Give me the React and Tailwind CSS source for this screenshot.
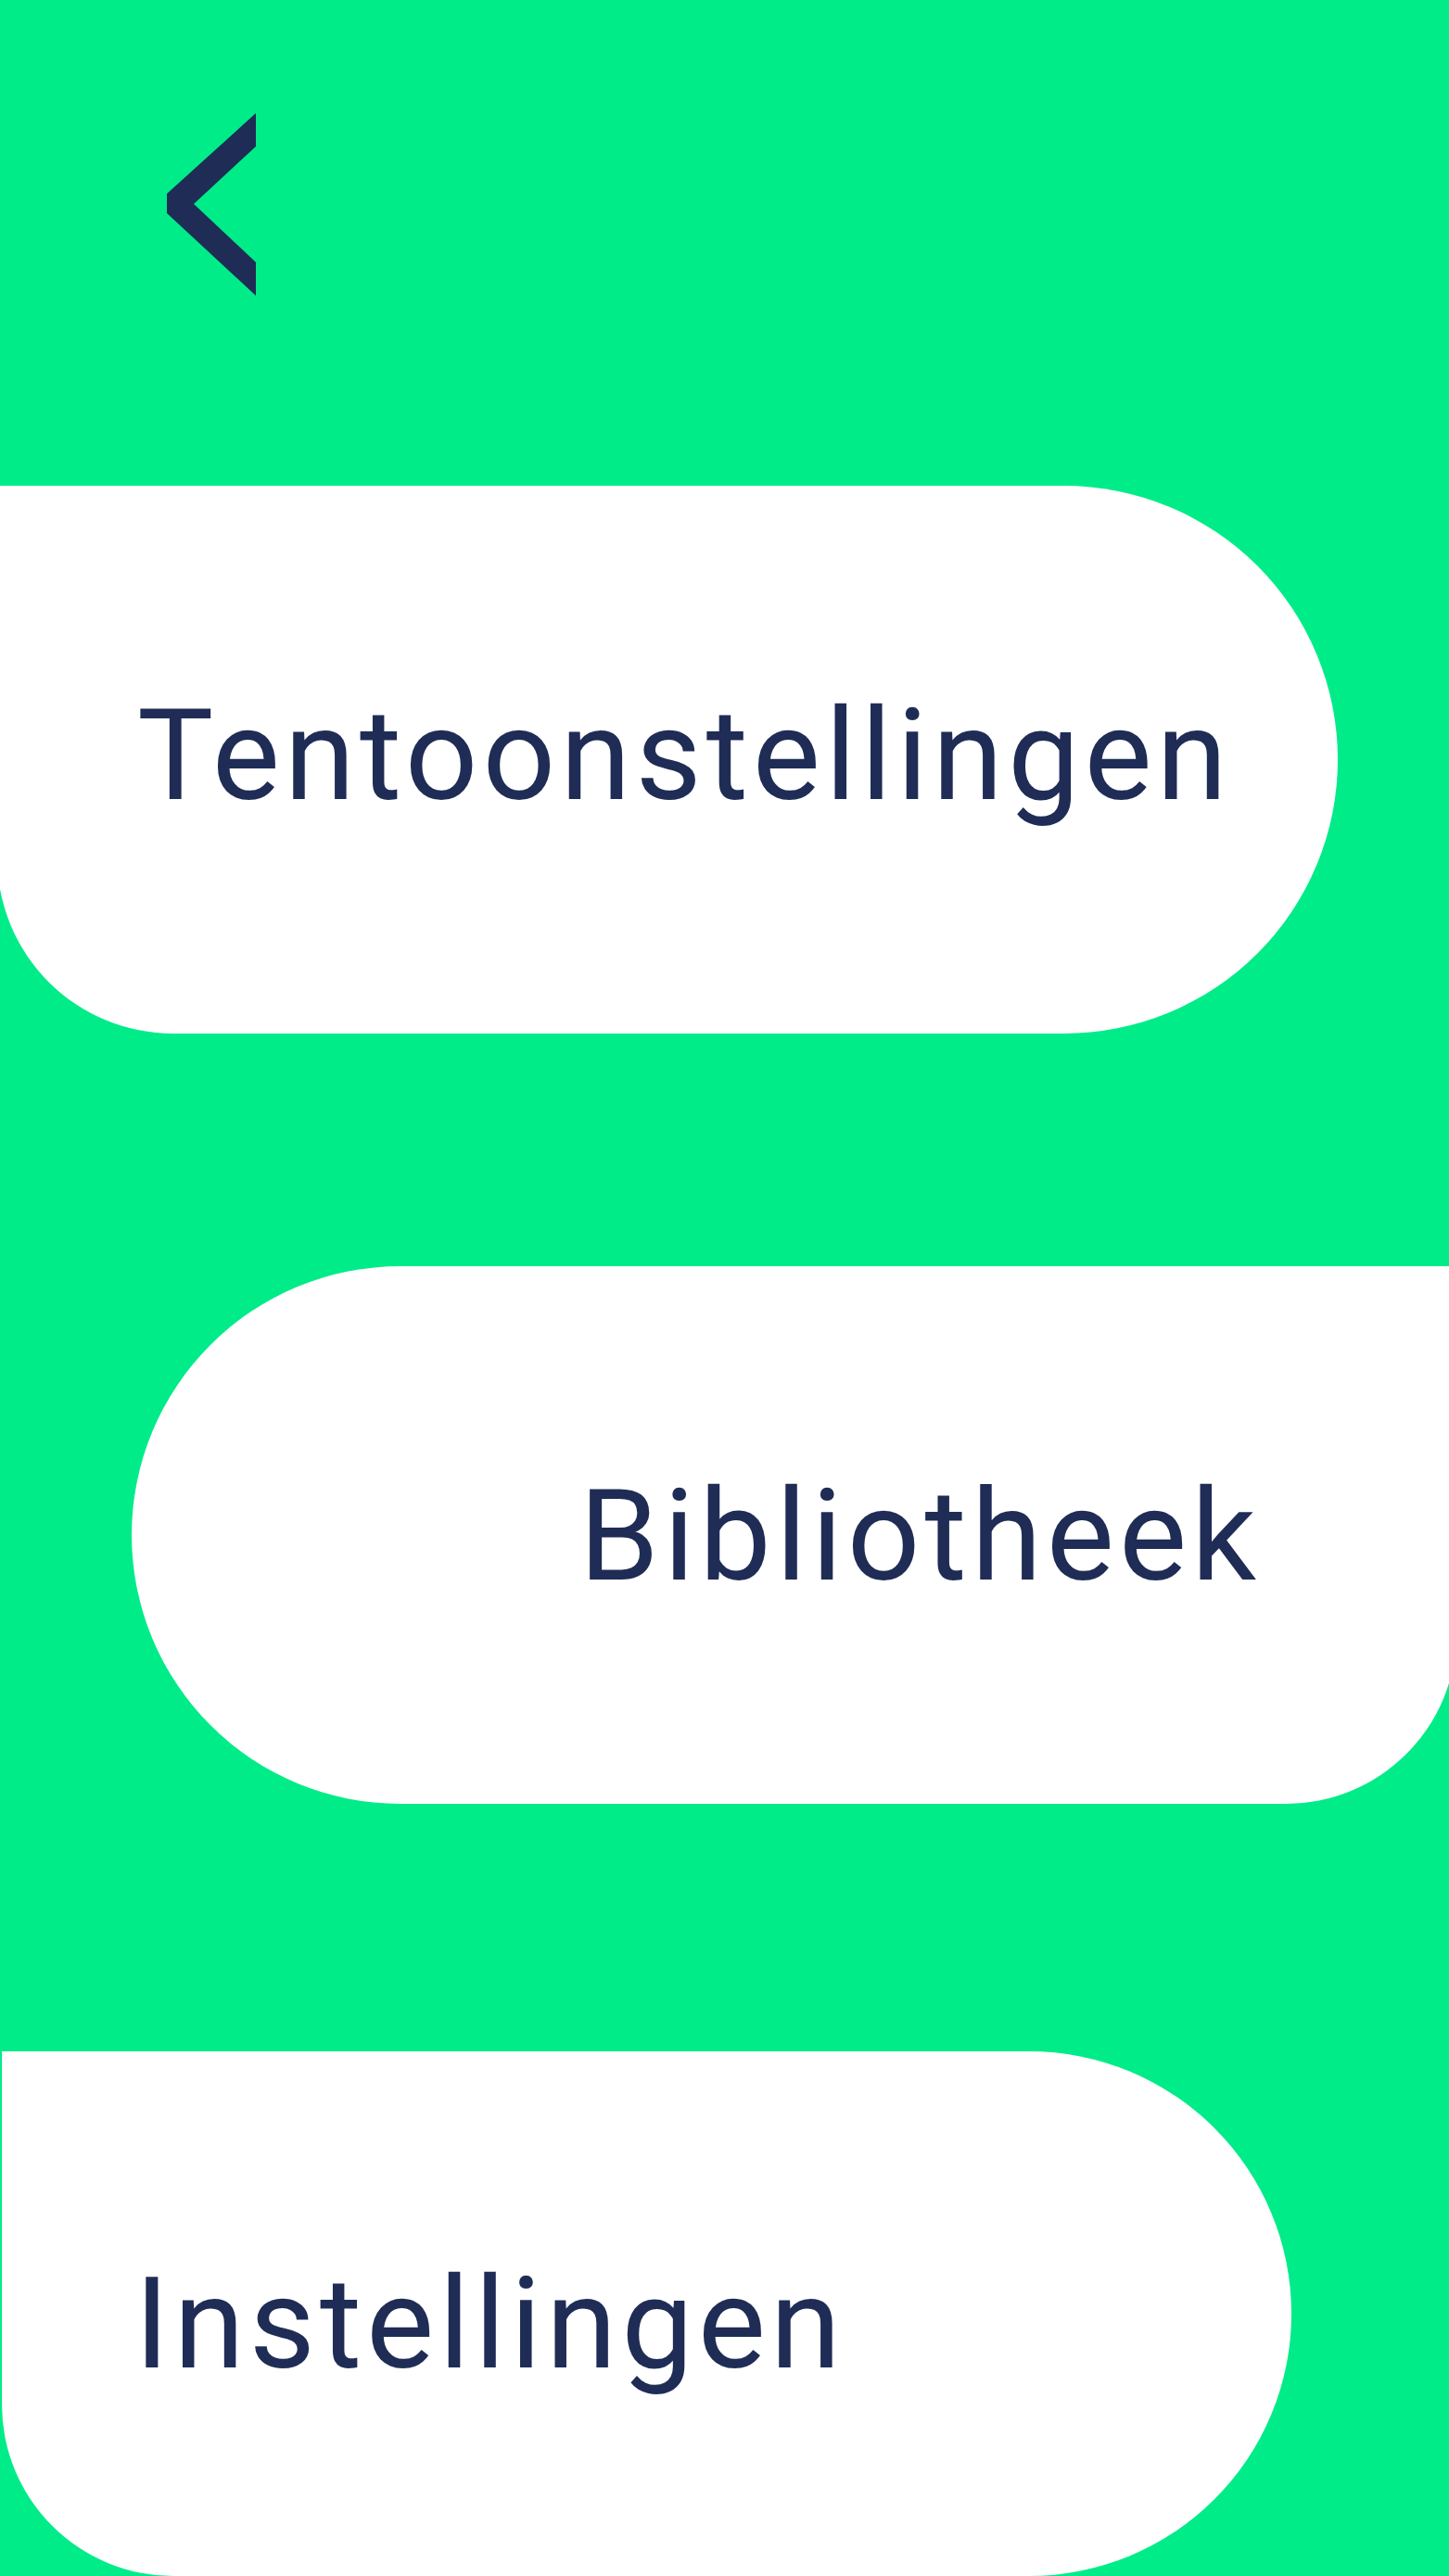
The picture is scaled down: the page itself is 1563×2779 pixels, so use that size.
import React from 'react';

const BackArrow = () => (
  <svg width="96" height="197" viewBox="0 0 96 197" className="block">
    <polygon points="96,0 96,36 29,98 96,161 96,197 0,108 0,87" fill="#1f2c55" />
  </svg>
);

const App = () => {
  return (
    <div className="w-[1563px] h-[2779px] overflow-hidden bg-[#00ec88] flex flex-col" style={{ fontFamily: 'Roboto, "Noto Sans", sans-serif' }}>
      {/* Header */}
      <div className="h-[524px] pt-[122px] pl-[180px] shrink-0">
        <button className="block">
          <BackArrow />
        </button>
      </div>

      {/* Tentoonstellingen */}
      <div className="shrink-0 -ml-[3px] w-[1446px] h-[591px] bg-white rounded-r-[296px] rounded-bl-[190px] flex items-center pl-[151px] pb-[10px]">
        <span className="text-[138px] leading-none tracking-[5px] text-[#1f2c55]">Tentoonstellingen</span>
      </div>

      {/* Bibliotheek */}
      <div className="shrink-0 mt-[251px] ml-[142px] w-[1429px] h-[580px] bg-white rounded-l-[290px] rounded-br-[184px] flex items-center justify-end pr-[211px] pt-[2px]">
        <span className="text-[138px] leading-none tracking-[5px] text-[#1f2c55]">Bibliotheek</span>
      </div>

      {/* Instellingen */}
      <div className="shrink-0 mt-[267px] ml-[2px] w-[1391px] h-[566px] bg-white rounded-r-[283px] rounded-bl-[185px] flex items-center pl-[143px] pt-[22px]">
        <span className="text-[138px] leading-none tracking-[5px] text-[#1f2c55]">Instellingen</span>
      </div>
    </div>
  );
};

export default App;
